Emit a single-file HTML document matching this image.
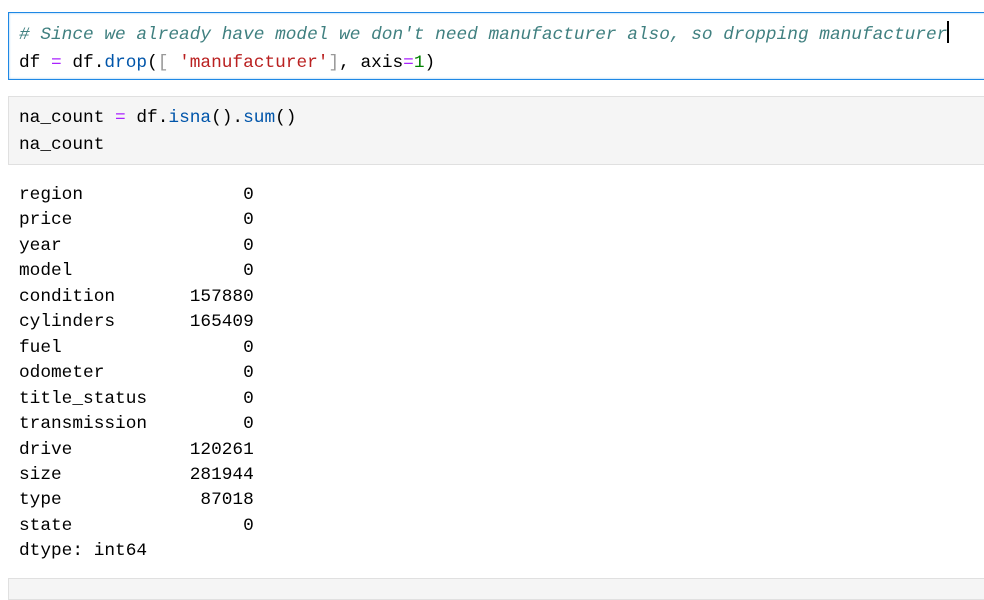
<!DOCTYPE html>
<html><head><style>
body{margin:0;background:#fff;width:984px;height:585px;overflow:hidden;font-family:"Liberation Mono",monospace;font-size:17.8px;color:#000}
.c1{position:absolute;left:8px;top:12px;width:990px;height:66px;border:1px solid #1e88e5;box-shadow:inset 0 0 2px #90c2f0}
.c2{position:absolute;left:8px;top:96px;width:990px;height:67px;border:1px solid #e0e0e0;background:#f5f5f5}
.c3{position:absolute;left:8px;top:578px;width:990px;height:20px;border:1px solid #e0e0e0;background:#f5f5f5}
pre{margin:0;font:inherit;white-space:pre;position:absolute}
.cm{color:#408080;font-style:italic}.p{color:#aa22ff}.f{color:#0055aa}.s{color:#ba2121}.n{color:#008000}.b{color:#999}
.cur{display:inline-block;width:2px;height:22px;background:#000;vertical-align:-4px}
</style></head><body>
<div class="c1"></div>
<pre style="left:19px;top:21px;line-height:28px"><span class="cm"># Since we already have model we don't need manufacturer also, so dropping manufacturer</span><span class="cur"></span>
df <span class="p">=</span> df.<span class="f">drop</span>(<span class="b">[</span> <span class="s">'manufacturer'</span><span class="b">]</span>, axis<span class="p">=</span><span class="n">1</span>)</pre>
<div class="c2"></div>
<pre style="left:19px;top:105px;line-height:27px">na_count <span class="p">=</span> df.<span class="f">isna</span>().<span class="f">sum</span>()
na_count</pre>
<pre style="left:19px;top:183px;line-height:25.45px">region               0
price                0
year                 0
model                0
condition       157880
cylinders       165409
fuel                 0
odometer             0
title_status         0
transmission         0
drive           120261
size            281944
type             87018
state                0
dtype: int64</pre>
<div class="c3"></div>
</body></html>
